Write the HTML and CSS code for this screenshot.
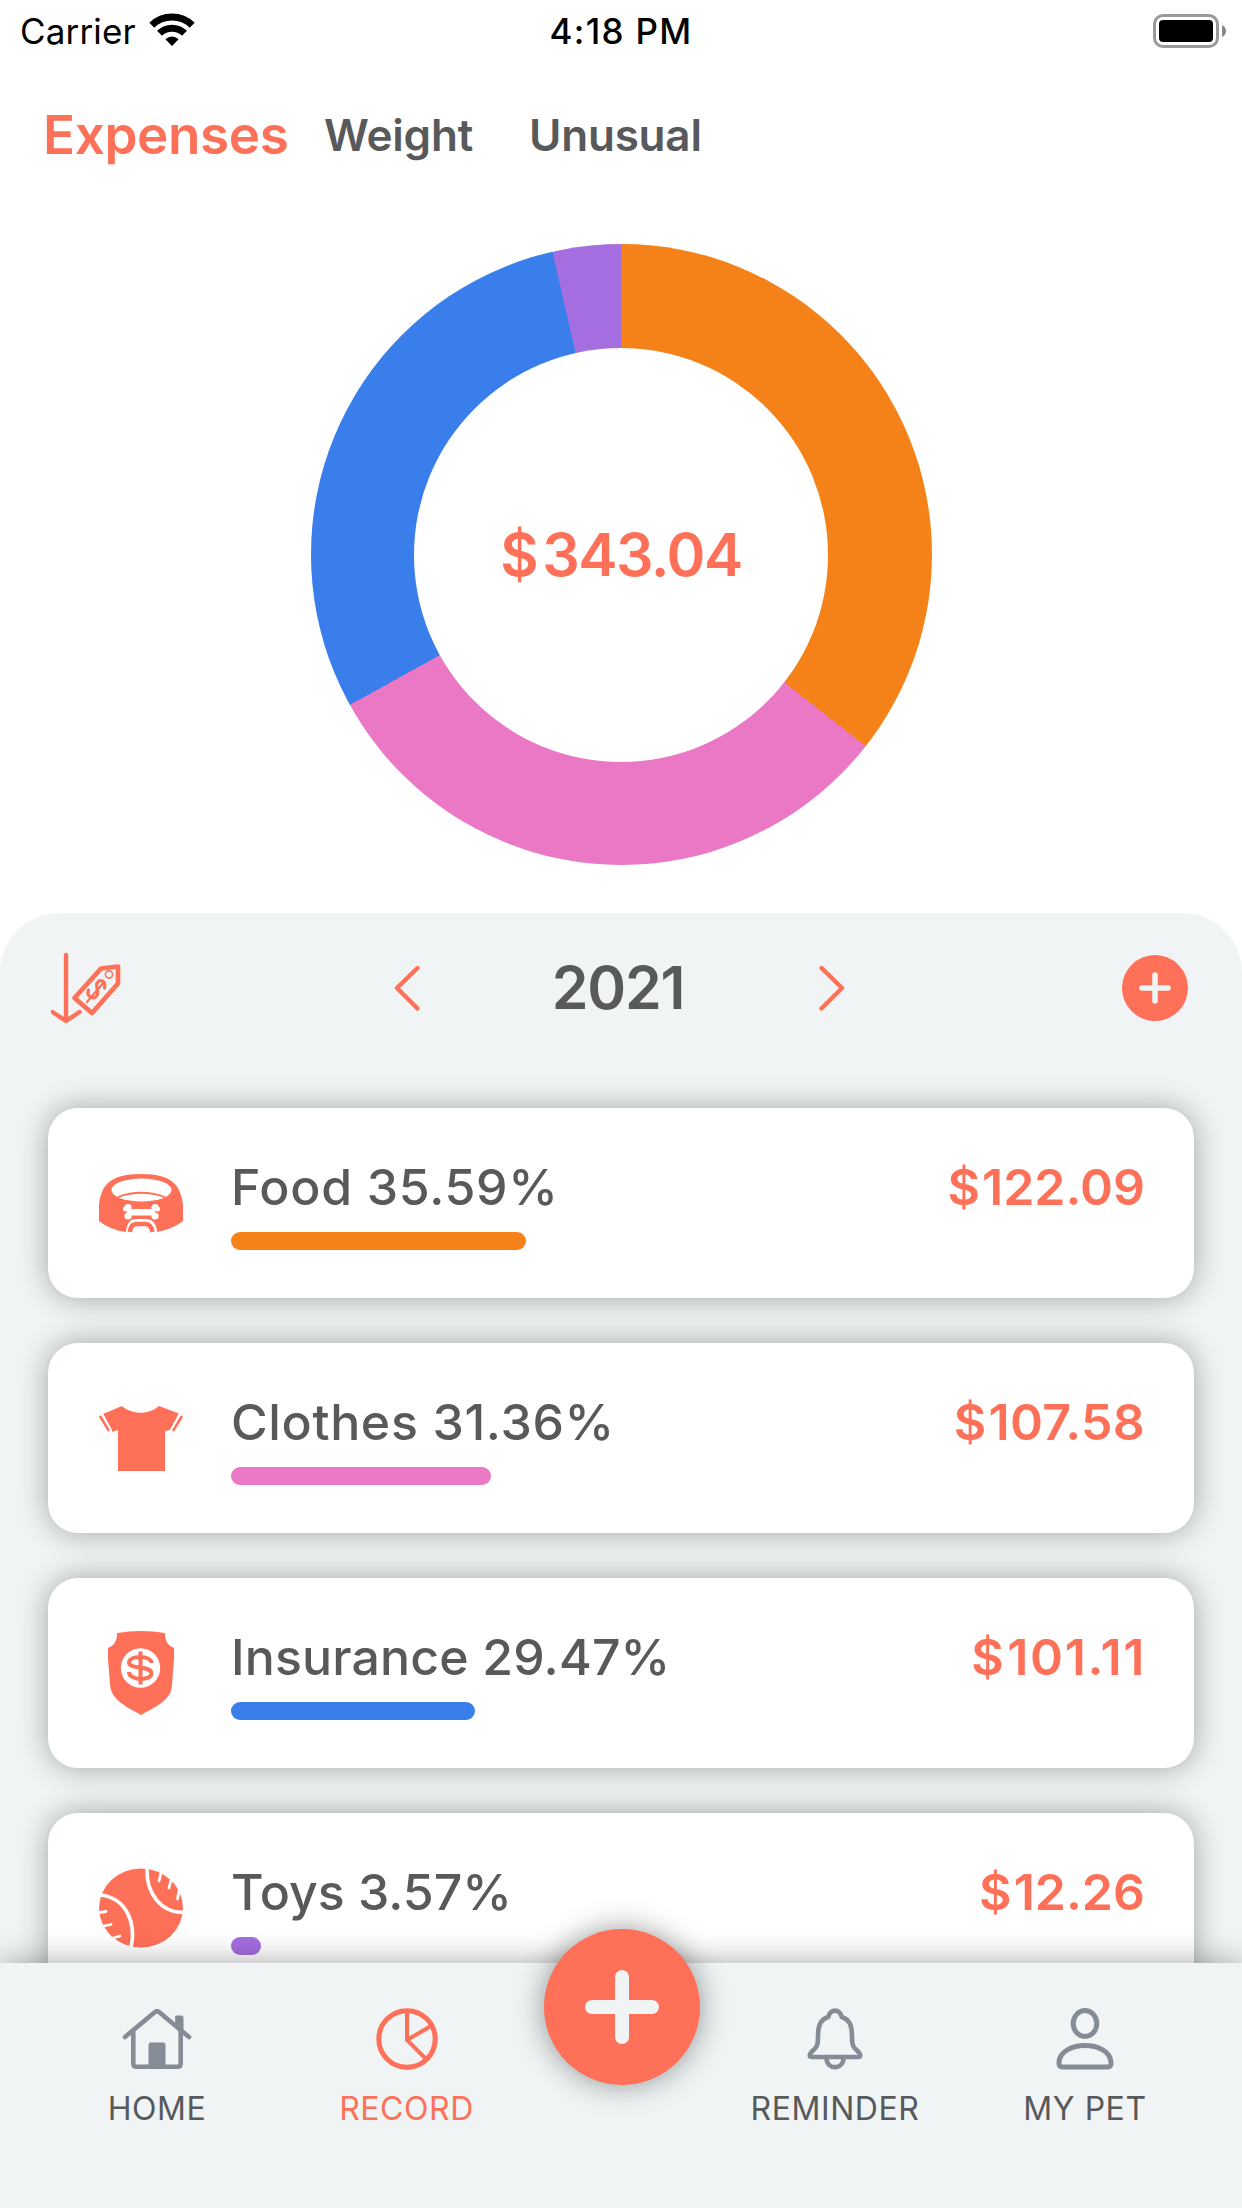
FILE: index.html
```html
<!DOCTYPE html>
<html lang="en">
<head>
<meta charset="utf-8">
<title>Expenses</title>
<link rel="stylesheet" href="styles.css">
</head>
<body>
<div class="screen">
  <header class="status">
    <div class="status-left">
      <span class="carrier">Carrier</span>
      <svg class="wifi" width="46" height="33" viewBox="0 0 46 33">
        <g fill="none" stroke="#000" stroke-width="7">
          <path d="M2.8 12.2A29 29 0 0 1 43.2 12.2"/>
          <path d="M10.5 20.2A18 18 0 0 1 35.5 20.2"/>
        </g>
        <path d="M16.4 26.2a9.4 9.4 0 0 1 13.2 0L23 33z"/>
      </svg>
    </div>
    <span class="clock">4:18 PM</span>
    <svg class="battery" width="74" height="34" viewBox="0 0 74 34">
      <rect x="1.5" y="1.5" width="63" height="31" rx="8.5" fill="none" stroke="#999" stroke-width="3"/>
      <rect x="6" y="6" width="54" height="22" rx="4" fill="#000"/>
      <path d="M69 11q4 2 4 6t-4 6z" fill="#888"/>
    </svg>
  </header>

  <nav class="sections">
    <span class="section active">Expenses</span>
    <span class="section weight">Weight</span>
    <span class="section unusual">Unusual</span>
  </nav>

  <section class="chart">
    <div class="donut"><div class="total"><span><span class="currency">$</span>343.04</span></div></div>
  </section>

  <main class="panel">
    <div class="toolbar">
      <svg class="sort" width="70" height="74" viewBox="0 0 70 74" fill="none" stroke="#ff7058" stroke-linecap="round" stroke-linejoin="round">
        <path d="M15 3v66M1.500 60l13.500 9 13.500-9" stroke-width="4.400"/>
        <path d="M50 16.500L67 14.500V31.500L41 61L23.500 46z" stroke-width="4.700"/>
        <circle cx="58" cy="22.500" r="3.600" stroke-width="1.600"/>
        <path d="M53.500 36c2-8-5-9-7.500-5-2 3.500 2.500 8 0 12.500-2.500 4.500-11 2-8.500-5.500" stroke-width="3.200"/>
        <path d="M36 50L53 30" stroke-width="2.200"/>
      </svg>
      <div class="year-picker">
        <svg width="26" height="46" viewBox="0 0 26 46" fill="none" stroke="#ff7058" stroke-width="4.400" stroke-linecap="round" stroke-linejoin="round"><path d="M23.500 3L3 23l20.500 20.500"/></svg>
        <span class="year">2021</span>
        <svg width="26" height="46" viewBox="0 0 26 46" fill="none" stroke="#ff7058" stroke-width="4.400" stroke-linecap="round" stroke-linejoin="round"><path d="M2.500 3L23 23 2.500 43.500"/></svg>
      </div>
      <svg class="add" width="66" height="66" viewBox="0 0 66 66"><circle cx="33" cy="33" r="33" fill="#ff7058"/><path d="M33 20v26M20 33h26" stroke="#f0f4f5" stroke-width="5.500" stroke-linecap="round"/></svg>
    </div>

    <div class="cards">
      <article class="card card-food">
        <svg class="icon" width="86" height="86" viewBox="0 0 86 86">
          <path d="M1 60V44C3 26 10 13 43 13S83 26 85 44V60Q75 68 59 71V69Q57 58 48 58H38Q29 58 28 71Q12 69 1 60z" fill="#ff7058"/>
          <ellipse cx="43.500" cy="29" rx="30" ry="11.500" fill="#fff"/>
          <path d="M20 36Q43 27.500 67 36" fill="none" stroke="#ff7058" stroke-width="1.800"/>
          <g fill="#fff"><path d="M29 48h28v6.500H29z"/><circle cx="30" cy="46.500" r="3.600"/><circle cx="30" cy="55" r="3.600"/><circle cx="57" cy="46.500" r="3.600"/><circle cx="57" cy="55" r="3.600"/><circle cx="27.500" cy="48" r="2.500"/><circle cx="59.500" cy="48" r="2.500"/></g>
          <path d="M32 71Q32.500 63.500 38 63H48Q53 63.500 54.500 71" fill="none" stroke="#ff7058" stroke-width="4.500"/>
        </svg>
        <div class="detail"><span class="name">Food 35.59%</span><div class="bar food" style="width:35.59%"></div></div>
        <span class="amount"><span class="currency">$</span>122.09</span>
      </article>
      <article class="card card-clothes">
        <svg class="icon" width="86" height="86" viewBox="0 0 86 86">
          <path d="M5 22L24 14C34 23 51 23 61 14L81 21.500L72 38L67 39V79H20V38L14 40z" fill="#ff7058"/>
          <path d="M2 24L11 39M84 24L75 39" stroke="#ff7058" stroke-width="2.500"/>
          <path d="M4.500 22.500L13.500 39M81.500 22.500L72.500 39" stroke="#fff" stroke-width="1.800"/>
        </svg>
        <div class="detail"><span class="name">Clothes 31.36%</span><div class="bar clothes" style="width:31.36%"></div></div>
        <span class="amount"><span class="currency">$</span>107.58</span>
      </article>
      <article class="card card-insurance">
        <svg class="icon" width="86" height="86" viewBox="0 0 86 86">
          <path d="M19 3Q43-1 67 3V6Q68 15 76 18V29L74 54C74 71 56 77 43 85C30 77 13 71 12 54L10 29V18Q18 15 19 6z" fill="#ff7058"/>
          <circle cx="42.500" cy="38" r="19.700" fill="#fff"/>
          <path d="M53.500 33C53.500 25 31 25 31 32.500C31 40 53.500 35 53.500 43.500C53.500 51 31 51 31 42M42.500 21.500v33" fill="none" stroke="#ff7058" stroke-width="4"/>
        </svg>
        <div class="detail"><span class="name">Insurance 29.47%</span><div class="bar insurance" style="width:29.47%"></div></div>
        <span class="amount"><span class="currency">$</span>101.11</span>
      </article>
      <article class="card card-toys">
        <svg class="icon" width="86" height="86" viewBox="0 0 86 86">
          <ellipse cx="43" cy="43" rx="42" ry="39.500" fill="#ff7058"/>
          <g fill="none" stroke="#fff" stroke-width="3.600">
            <path d="M49 3C48 29 63 47 85 47.500M2 30C26 32 39 55 33 83"/>
            <g stroke-width="2.800" stroke-linecap="round"><path d="M63 8l-2 8M73 15l-2 8M81 26l-1.500 8M2 47.500l6-1M6 61l7-1.500M15 73l7-2"/></g>
          </g>
        </svg>
        <div class="detail"><span class="name">Toys 3.57%</span><div class="bar toys" style="width:3.57%"></div></div>
        <span class="amount"><span class="currency">$</span>12.26</span>
      </article>
    </div>
  </main>

  <nav class="tabs">
    <div class="tab">
      <svg width="70" height="62" viewBox="0 0 70 62" fill="none" stroke="#868c96" stroke-width="4.600" stroke-linecap="round" stroke-linejoin="round">
        <path d="M3 29L33 4Q35 2.200 37 4L67 29M11.300 23V55.500Q11.300 58.700 14.500 58.700H55.500Q58.700 58.700 58.700 55.500V23"/>
        <path d="M54 8h5.500a1.500 1.500 0 0 1 1.500 1.500V24L54 18z M28.500 35h13a1.500 1.500 0 0 1 1.500 1.500V59H27V36.500a1.500 1.500 0 0 1 1.500-1.500z" fill="#868c96" stroke-width="1"/>
      </svg>
      <span>HOME</span>
    </div>
    <div class="tab current">
      <svg width="62" height="62" viewBox="0 0 62 62" fill="none" stroke="#ff7058" stroke-width="4"><circle cx="31" cy="31" r="28.200" stroke-width="5"/><path d="M31 3V32L50 51M31 32L55 18"/></svg>
      <span>RECORD</span>
    </div>
    <div class="fab">
      <svg width="74" height="74" viewBox="0 0 74 74"><path d="M37 7v60M7 37h60" stroke="#f0f4f5" stroke-width="14" stroke-linecap="round"/></svg>
    </div>
    <div class="tab">
      <svg width="56" height="62" viewBox="0 0 56 62" fill="none" stroke="#868c96" stroke-width="4.600" stroke-linejoin="round" stroke-linecap="round">
        <path d="M21.300 9C23 .500 33 .500 34.700 9C43 11.500 45 18 45 29C45 39 47 39.500 51.500 44C54 47 54 49 51 49H5C2 49 2 47 4.500 44C9 39.500 11 39 11 29C11 18 13 11.500 21.300 9zM19.500 50.500C20 62 36 62 36.500 50.500"/>
      </svg>
      <span>REMINDER</span>
    </div>
    <div class="tab">
      <svg width="58" height="62" viewBox="0 0 58 62" fill="none" stroke="#868c96" stroke-width="5"><ellipse cx="29" cy="15.500" rx="11.800" ry="13"/><path d="M6.500 59H51.500Q55.500 59 55 54C53 32 5 32 3 54Q2.500 59 6.500 59z"/></svg>
      <span>MY PET</span>
    </div>
  </nav>
</div>
</body>
</html>
```

FILE: styles.css
```css
* { box-sizing: border-box; }
body { margin: 0; background: #fff; font-family: Inter, "Liberation Sans", sans-serif; color: #58595b; }
svg { display: block; flex: none; }
.screen { width: 1242px; height: 2208px; overflow: hidden; display: flex; flex-direction: column; }

.status { height: 60px; padding: 1px 20px 0; display: grid; grid-template-columns: 1fr auto 1fr; align-items: center; color: #000; font-size: 35px; }
.status-left { display: flex; align-items: center; gap: 13px; }
.carrier { letter-spacing: .15px; }
.wifi { margin-bottom: 2px; }
.clock { font-weight: 550; letter-spacing: 1.3px; }
.battery { justify-self: end; margin-right: -5px; }

.sections { height: 150px; padding-left: 43px; display: flex; align-items: center; font-weight: 600; font-size: 44px; white-space: nowrap; }
.section.active { width: 281px; font-size: 53px; letter-spacing: -.4px; color: #ff7058; }
.section.weight { width: 205px; letter-spacing: -.2px; }
.section.unusual { letter-spacing: -.2px; }

.chart { height: 703px; padding-top: 34px; }
.donut { width: 621px; height: 621px; margin: 0 auto; border-radius: 50%; display: grid; place-items: center; background: conic-gradient(#f58219 0 35.59%, #ea78c4 0 66.95%, #397eeb 0 96.43%, #a56ee0 0); }
.total { width: 414px; height: 414px; border-radius: 50%; background: #fff; display: grid; place-items: center; color: #ff7058; font-size: 59px; font-weight: 600; letter-spacing: -1.5px; }
.total .currency { margin-right: 5px; }

.panel { flex: 1; min-height: 0; overflow: hidden; border-radius: 60px 60px 0 0; background: #f0f4f5; }
.toolbar { height: 150px; padding: 0 54px 0 51px; display: grid; grid-template-columns: 1fr 451px 1fr; align-items: center; }
.sort { margin-top: 2px; }
.year-picker { display: flex; align-items: center; justify-content: space-between; }
.year { margin: -2px 3px 0 0; font-size: 59px; font-weight: 600; letter-spacing: -1.2px; }
.add { justify-self: end; }
.cards { padding: 45px 48px 0; display: flex; flex-direction: column; gap: 45px; }
.card { height: 190px; flex: none; padding: 0 49px 0 50px; border-radius: 30px; background: #fff; box-shadow: 0 0 30px rgba(0,0,0,.33); display: flex; }
.icon { margin-top: 53px; }
.detail { width: 829px; flex: none; margin-left: 47px; margin-right: -184px; padding-top: 49px; }
.name { display: block; height: 75px; line-height: 61px; font-size: 50px; font-weight: 540; }
.bar { height: 18px; border-radius: 9px; }
.food { background: #f58219; }
.clothes { background: #ea78c4; }
.insurance { background: #397eeb; }
.toys { background: #a56ee0; }
.amount { margin-left: auto; padding-top: 49px; line-height: 61px; color: #ff7058; font-size: 50px; font-weight: 570; }
.amount .currency { margin-right: 2px; }

.card-food .name { letter-spacing: .7px; }
.card-clothes .name { letter-spacing: .65px; }
.card-clothes .icon { margin-top: 49px; }
.card-clothes .amount { letter-spacing: .3px; }
.card-insurance .name { letter-spacing: .15px; }
.card-insurance .icon { margin-top: 52px; }
.card-insurance .amount { letter-spacing: 1.6px; margin-right: -1px; }
.card-toys .icon { margin-top: 52px; }

.tabs { position: relative; height: 245px; flex: none; display: grid; grid-template-columns: 314px 185px 245px 182px 318px; background: #f0f4f5; box-shadow: 0 0 30px rgba(0,0,0,.35); }
.tab { padding-top: 45px; display: flex; flex-direction: column; align-items: center; gap: 17px; font-size: 32px; line-height: 44px; letter-spacing: .55px; white-space: nowrap; }
.current { color: #ff7058; }
.fab { width: 156px; height: 156px; margin: -34px auto 0; border-radius: 50%; background: #ff7058; display: grid; place-items: center; box-shadow: 0 0 30px rgba(0,0,0,.4); }
```
